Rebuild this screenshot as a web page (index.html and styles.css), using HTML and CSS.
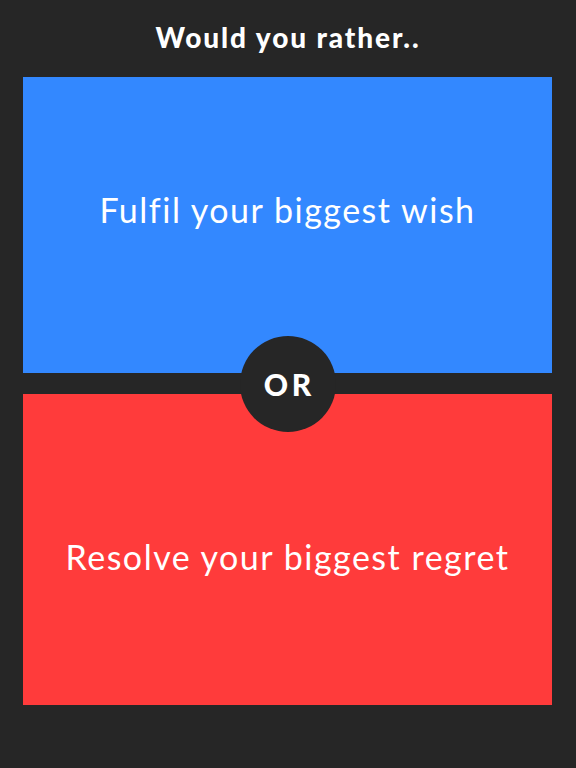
FILE: index.html
```html
<!DOCTYPE html>
<html lang="en">
<head>
    <meta charset="UTF-8">
    <meta name="viewport" content="width=device-width, initial-scale=1.0">
    <title>Would you rather</title>
    <link rel="stylesheet" href="styles.css">
</head>
<body>
    <header class="title-bar">
        <h1>Would you rather..</h1>
    </header>

    <main class="choices">
        <div class="choice blue">
            <span>Fulfil your biggest wish</span>
        </div>
        <div class="choice red">
            <span>Resolve your biggest regret</span>
        </div>

        <!-- Badge au milieu -->
        <div class="or-badge">OR</div>
    </main>
</body>
</html>
```

FILE: styles.css
```css
body {
    margin: 0;
    height: 768px;
    background-color: #262626;
    font-family: Lato, "Open Sans", sans-serif;
    color: white;
}

.title-bar {
    height: 77px;
    display: flex;
    justify-content: center;
    align-items: center;
}

.title-bar h1 {
    margin: 0;
    font-size: 28px;
    font-weight: 900;
    letter-spacing: 1.9px;
    padding-bottom: 3px;
}

.choices {
    position: relative;
    display: flex;
    flex-direction: column;
    gap: 21px;
    margin: 0 24px 0 23px;
}

.choice {
    display: flex;
    justify-content: center;
    align-items: center;
    font-size: 34px;
    letter-spacing: 1.5px;
}

.blue {
    height: 296px;
    background-color: #3388ff;
}

.blue span {
    padding-bottom: 32px;
}

.red {
    height: 311px;
    background-color: #ff3b3b;
}

.red span {
    padding-top: 14px;
}

.or-badge {
    position: absolute;
    top: 259px;
    left: 50%;
    transform: translateX(-50%);
    width: 96px;
    height: 96px;
    border-radius: 50%;
    background-color: #262626;
    display: flex;
    justify-content: center;
    align-items: center;
    font-size: 30px;
    font-weight: 900;
    letter-spacing: 3.5px;
    text-indent: 3.5px;
}
```
